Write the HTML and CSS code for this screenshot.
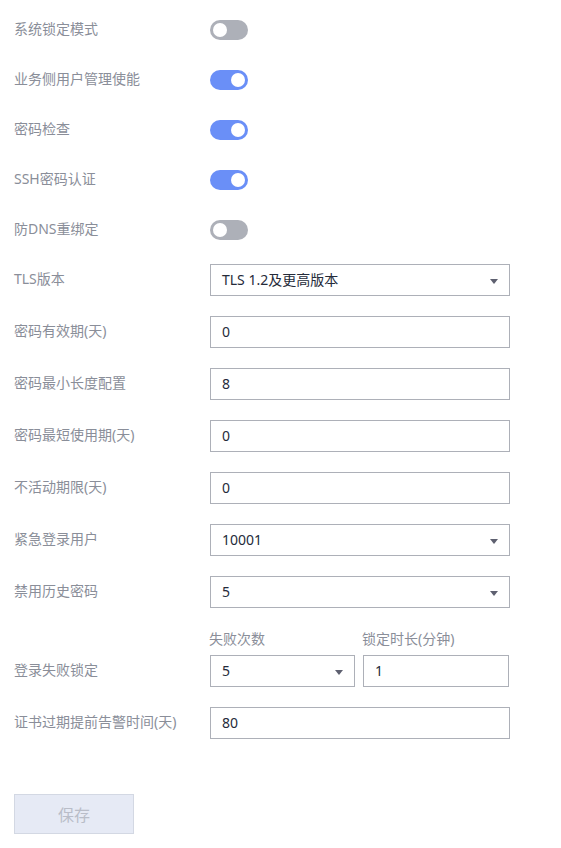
FILE: index.html
```html
<!DOCTYPE html>
<html lang="zh-CN">
<head>
    <meta charset="UTF-8">
    <title>安全配置</title>
    <link rel="stylesheet" href="styles.css">
</head>
<body>
    <div class="form">
        <div class="row switch-row">
            <label class="label">系统锁定模式</label>
            <span class="switch"></span>
        </div>
        <div class="row switch-row">
            <label class="label">业务侧用户管理使能</label>
            <span class="switch on"></span>
        </div>
        <div class="row switch-row">
            <label class="label">密码检查</label>
            <span class="switch on"></span>
        </div>
        <div class="row switch-row">
            <label class="label">SSH密码认证</label>
            <span class="switch on"></span>
        </div>
        <div class="row switch-row">
            <label class="label">防DNS重绑定</label>
            <span class="switch"></span>
        </div>

        <div class="row input-row first">
            <label class="label">TLS版本</label>
            <div class="select">TLS 1.2及更高版本</div>
        </div>
        <div class="row input-row">
            <label class="label">密码有效期(天)</label>
            <div class="input">0</div>
        </div>
        <div class="row input-row">
            <label class="label">密码最小长度配置</label>
            <div class="input">8</div>
        </div>
        <div class="row input-row">
            <label class="label">密码最短使用期(天)</label>
            <div class="input">0</div>
        </div>
        <div class="row input-row">
            <label class="label">不活动期限(天)</label>
            <div class="input">0</div>
        </div>
        <div class="row input-row">
            <label class="label">紧急登录用户</label>
            <div class="select">10001</div>
        </div>
        <div class="row input-row">
            <label class="label">禁用历史密码</label>
            <div class="select">5</div>
        </div>

        <div class="row lock-head">
            <span></span>
            <div class="pair">
                <span class="sub-label">失败次数</span>
                <span class="sub-label">锁定时长(分钟)</span>
            </div>
        </div>
        <div class="row input-row lock-row">
            <label class="label">登录失败锁定</label>
            <div class="pair">
                <div class="select">5</div>
                <div class="input">1</div>
            </div>
        </div>
        <div class="row input-row">
            <label class="label">证书过期提前告警时间(天)</label>
            <div class="input">80</div>
        </div>

        <button class="btn-save" disabled>保存</button>
    </div>
</body>
</html>
```

FILE: styles.css
```css
body {
    margin: 0;
    font-family: "Noto Sans", "Noto Sans CJK SC", sans-serif;
    font-size: 14px;
    color: #252b3a;
    background: #fff;
}
.form {
    padding: 20px 14px;
}
.row {
    display: grid;
    grid-template-columns: 196px 300px;
    align-items: center;
}
.label {
    color: #8a8e99;
    font-size: 14px;
    line-height: 20px;
    margin-top: -2px;
}
.switch-row {
    height: 20px;
    margin-bottom: 30px;
}
.switch-row:nth-child(5) {
    margin-bottom: 24px;
}
.switch {
    position: relative;
    width: 38px;
    height: 20px;
    border-radius: 10px;
    background: #adb0b8;
}
.switch::after {
    content: "";
    position: absolute;
    top: 3px;
    left: 3px;
    width: 14px;
    height: 14px;
    border-radius: 50%;
    background: #fff;
}
.switch.on {
    background: #6a8ff7;
}
.switch.on::after {
    left: 21px;
}
.input-row {
    margin-bottom: 20px;
}
.input, .select {
    box-sizing: border-box;
    height: 32px;
    line-height: 30px;
    padding: 0 11px;
    border: 1px solid #adb0b8;
    background: #fff;
}
.select {
    position: relative;
}
.select::after {
    content: "";
    position: absolute;
    right: 11px;
    top: 14px;
    border-left: 4px solid transparent;
    border-right: 4px solid transparent;
    border-top: 5px solid #5e6070;
}
.pair {
    display: grid;
    grid-template-columns: 145px 146px;
    gap: 8px;
}
.lock-head {
    height: 20px;
    margin-bottom: 7px;
}
.sub-label {
    color: #8a8e99;
    font-size: 14px;
    margin-left: -1px;
}
.btn-save {
    display: block;
    margin-top: 55px;
    width: 120px;
    height: 40px;
    border: 1px solid #d3d8e3;
    background: #e6eaf5;
    color: #b9bdc8;
    font-family: "Noto Sans CJK SC", sans-serif;
    font-size: 16px;
}
```
